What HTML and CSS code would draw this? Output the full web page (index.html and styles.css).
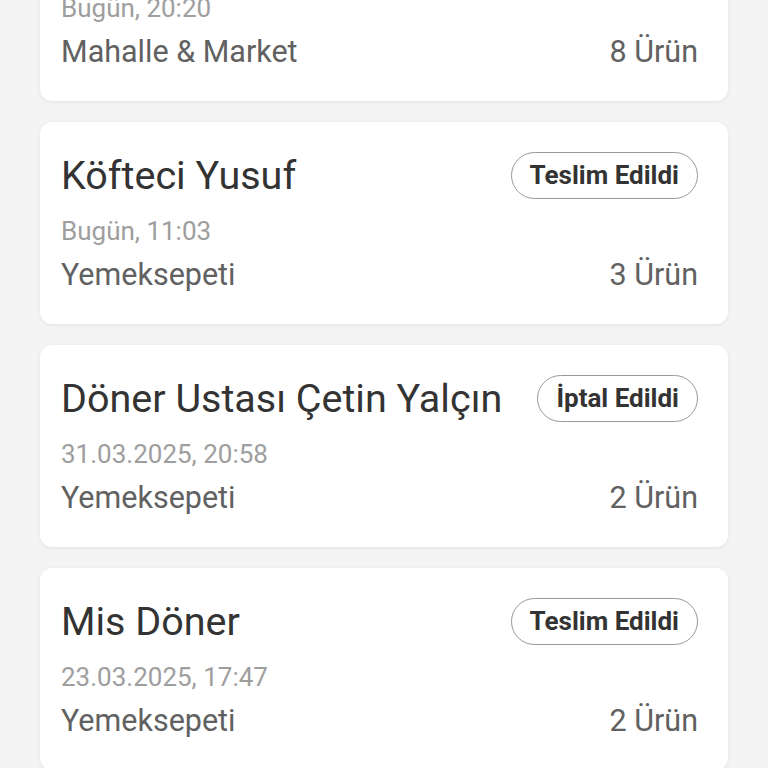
FILE: index.html
```html
<!DOCTYPE html>
<html lang="tr">
<head>
    <meta charset="UTF-8">
    <meta name="viewport" content="width=device-width, initial-scale=1.0">
    <title>Siparişlerim</title>
    <link rel="stylesheet" href="styles.css">
</head>
<body>

    <div class="order-list">

        <!-- Partly scrolled out of view -->
        <div class="order-card">
            <div class="order-head">
                <span class="order-title">Mahalle Market</span>
                <span class="status-badge">Teslim Edildi</span>
            </div>
            <div class="order-date">Bugün, 20:20</div>
            <div class="order-foot">
                <span>Mahalle &amp; Market</span>
                <span>8 Ürün</span>
            </div>
        </div>

        <div class="order-card">
            <div class="order-head">
                <span class="order-title">Köfteci Yusuf</span>
                <span class="status-badge">Teslim Edildi</span>
            </div>
            <div class="order-date">Bugün, 11:03</div>
            <div class="order-foot">
                <span>Yemeksepeti</span>
                <span>3 Ürün</span>
            </div>
        </div>

        <div class="order-card">
            <div class="order-head">
                <span class="order-title">Döner Ustası Çetin Yalçın</span>
                <span class="status-badge">İptal Edildi</span>
            </div>
            <div class="order-date">31.03.2025, 20:58</div>
            <div class="order-foot">
                <span>Yemeksepeti</span>
                <span>2 Ürün</span>
            </div>
        </div>

        <div class="order-card">
            <div class="order-head">
                <span class="order-title">Mis Döner</span>
                <span class="status-badge">Teslim Edildi</span>
            </div>
            <div class="order-date">23.03.2025, 17:47</div>
            <div class="order-foot">
                <span>Yemeksepeti</span>
                <span>2 Ürün</span>
            </div>
        </div>

    </div>

</body>
</html>
```

FILE: styles.css
```css
body {
    font-family: Roboto, "Noto Sans", sans-serif;
    background: #f4f4f4;
    margin: 0;
    padding: 0;
    overflow: hidden;
}
.order-list {
    display: flex;
    flex-direction: column;
    gap: 21px;
    padding: 0 40px;
    margin-top: -101px;
}
.order-card {
    background: #fff;
    border-radius: 12px;
    box-shadow: 0 1px 4px rgba(0, 0, 0, 0.08);
    padding: 30px 30px 32px 21px;
    height: 202px;
    box-sizing: border-box;
}
.order-head { display: flex; justify-content: space-between; align-items: center; height: 47px; }
.order-title { font-size: 39.5px; line-height: 47px; color: #333; }
.status-badge {
    font-size: 26px; line-height: 29px; font-weight: 700; color: #333;
    border: 1px solid #999; border-radius: 24px;
    padding: 8px 18px;
}
.order-date { font-size: 26px; line-height: 30px; color: #9e9e9e; margin-top: 17px; }
.order-foot {
    display: flex; justify-content: space-between;
    font-size: 30.5px; line-height: 34px; color: #616161; margin-top: 12px;
}
```
